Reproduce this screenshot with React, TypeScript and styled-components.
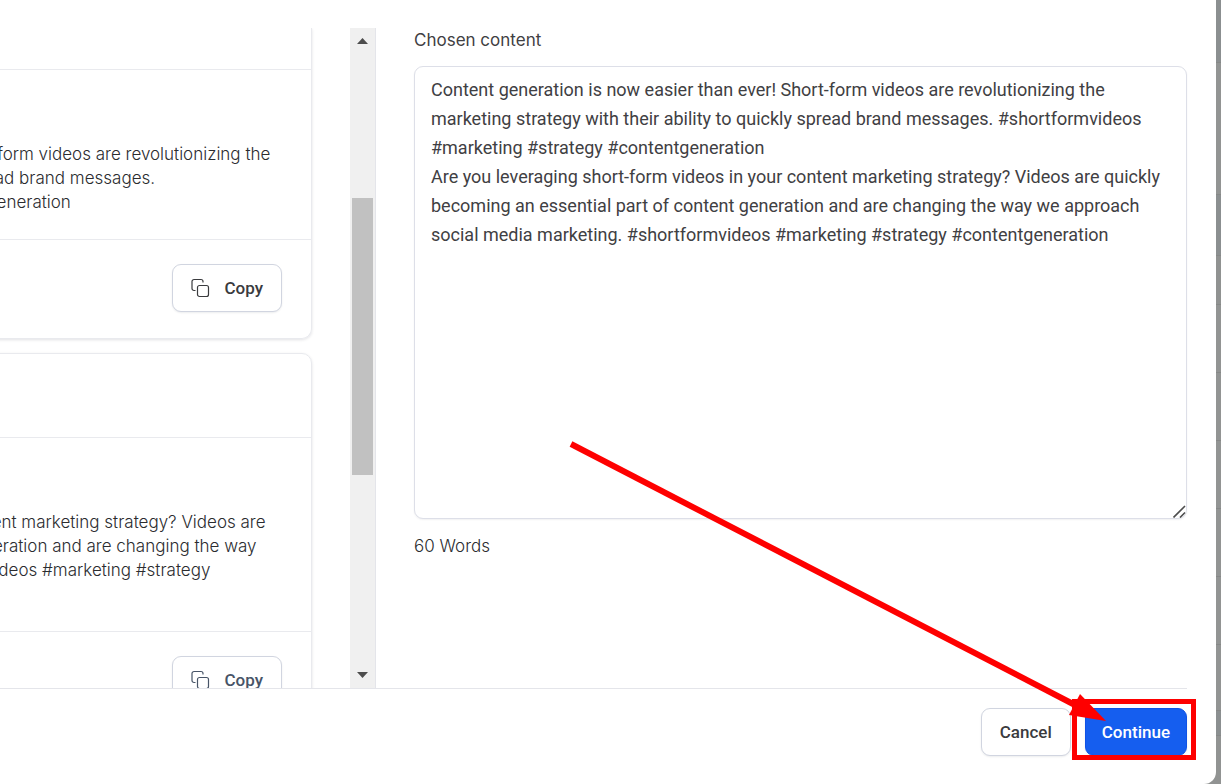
import React from "react";
import styled, { createGlobalStyle } from "styled-components";

const GlobalStyle = createGlobalStyle`
  *, *::before, *::after { box-sizing: border-box; }
  body { margin: 0; font-family: Inter, "Liberation Sans", sans-serif; color: #3f4043; }
`;

const Backdrop = styled.div`
  display: flex;
  height: 100vh;
  min-height: 520px;
  overflow: hidden;
  background: #919392;
`;

const Dialog = styled.main`
  flex: 1;
  min-width: 0;
  display: flex;
  flex-direction: column;
  padding-top: 28px;
  background: #fff;
  border-bottom-right-radius: 12px;
`;

const PageEdge = styled.aside`
  flex: 0 0 5px;
  display: flex;
  flex-direction: column;
`;

const Strip = styled.div<{ $size: number; $tone: string }>`
  flex: 0 0 ${(p) => p.$size}px;
  background: ${(p) => p.$tone};
  border-bottom: 1px solid #868887;
`;

const Columns = styled.div`
  flex: 1;
  min-height: 0;
  display: flex;
`;

const Results = styled.section`
  flex: 0 0 350px;
  display: flex;
  flex-direction: column;
  align-items: flex-end;
  gap: 14px;
  padding-right: 38px;
  overflow: hidden;
`;

const Card = styled.article<{ $scrolled?: boolean }>`
  flex: none;
  width: 738px;
  border: 1px solid #e9eaee;
  border-radius: ${(p) => (p.$scrolled ? "0 0 10px 10px" : "10px")};
  border-top-width: ${(p) => (p.$scrolled ? 0 : 1)}px;
  box-shadow: 0 1px 3px rgba(20, 20, 43, 0.12);
`;

const CardHeader = styled.header<{ $size: number }>`
  height: ${(p) => p.$size}px;
  border-bottom: 1px solid #e9eaee;
`;

const CardText = styled.p`
  margin: 0;
  padding: 72px 24px 25px;
  color: #2b2c2f;
  font-size: 17px;
  font-weight: 300;
  line-height: 24px;
  white-space: pre;
`;

const CardFooter = styled.footer`
  display: flex;
  justify-content: flex-end;
  padding: 24px 29px 26px;
  border-top: 1px solid #e9eaee;
`;

const Button = styled.button<{ $tone?: "primary" | "muted"; $pad?: number }>`
  display: flex;
  align-items: center;
  gap: 13px;
  height: 48px;
  padding: 0 ${(p) => p.$pad ?? 18}px;
  border: 1px solid ${(p) => (p.$tone === "primary" ? "#0f52e6" : "#d1d5e0")};
  border-radius: 9px;
  background: ${(p) => (p.$tone === "primary" ? "#155eef" : "#fff")};
  color: ${(p) => (p.$tone === "primary" ? "#fff" : p.$tone === "muted" ? "#475467" : "#3a3b3e")};
  font-family: Roboto, sans-serif;
  font-size: 17px;
  font-weight: 500;
  line-height: 24px;
  box-shadow: 0 1px 2px rgba(16, 24, 40, 0.08);
`;

const ScrollTrack = styled.div`
  flex: 0 0 26px;
  display: flex;
  flex-direction: column;
  align-items: center;
  justify-content: space-between;
  padding: 10px 1px;
  background: #f0f0f0;
  border-right: 1px solid #e4e5ea;
`;

const ScrollRoom = styled.div`
  flex: 1;
  align-self: stretch;
  display: flex;
  flex-direction: column;
  margin: 8px 1px;
`;

const ScrollThumb = styled.div`
  flex: 0 0 277px;
  margin-top: 146px;
  background: #c1c1c1;
`;

const Editor = styled.section`
  flex: 1;
  min-width: 0;
  display: flex;
  flex-direction: column;
  padding: 0 29px 0 38px;
`;

const Label = styled.label`
  font-size: 17px;
  line-height: 24px;
  margin-bottom: 14px;
`;

const TextBoxWrap = styled.div`
  position: relative;
`;

const TextBox = styled.textarea`
  display: block;
  width: 100%;
  height: 453px;
  padding: 8px 16px;
  border: 1px solid #dddfe8;
  border-radius: 9px;
  outline: none;
  resize: none;
  color: inherit;
  background: #fff;
  font-family: Roboto, sans-serif;
  font-size: 18px;
  line-height: 29px;
  box-shadow: 0 1px 2px rgba(16, 24, 40, 0.06);
`;

const Grip = styled.svg`
  position: absolute;
  right: 1px;
  bottom: 1px;
  pointer-events: none;
`;

const WordCount = styled.p`
  margin: 15px 0 0;
  color: #2b2c2f;
  font-size: 17px;
  font-weight: 300;
  line-height: 24px;
`;

const Actions = styled.footer`
  display: flex;
  justify-content: flex-end;
  gap: 14px;
  margin-right: 29px;
  padding: 19px 0 28px;
  border-top: 1px solid #e4e5ea;
`;

const Highlighted = styled.div`
  position: relative;
`;

const Frame = styled.div`
  position: absolute;
  inset: -9px -9px -4px -13px;
  border: 5px solid #fe0000;
  pointer-events: none;
`;

const Arrow = styled.svg`
  position: absolute;
  right: 77px;
  bottom: 32px;
  pointer-events: none;
`;

const CopyIcon = () => (
  <svg width="20" height="20" viewBox="0 0 20 20" fill="none" stroke="currentColor" strokeWidth="1.2" aria-hidden="true">
    <rect x="6.500" y="7.500" width="11" height="11" rx="2" />
    <path d="M4.500 12.500H3a2 2 0 0 1-2-2v-7a2 2 0 0 1 2-2h7a2 2 0 0 1 2 2v1" />
  </svg>
);

const Triangle = ({ down }: { down?: boolean }) => (
  <svg width="11" height="6" viewBox="0 0 11 6" fill="#4d4d4d" aria-hidden="true">
    <path d={down ? "M0 0h11L5.5 6z" : "M0 6h11L5.5 0z"} />
  </svg>
);

const strips: [number, string][] = [
  [63, "#8b8f90"], [132, "#929493"], [61, "#8b8f90"], [49, "#909291"], [68, "#929493"],
  [68, "#929493"], [68, "#929493"], [68, "#929493"], [68, "#929493"], [66, "#929493"], [25, "#8b8f90"],
];

const first = `Content generation is now easier than ever! Short-form videos are revolutionizing the
marketing strategy with their ability to quickly spread brand messages.
#shortformvideos #marketing #strategy #contentgeneration`;

const second = `Are you leveraging short-form videos in your content marketing strategy? Videos are
quickly becoming an essential part of content generation and are changing the way
we approach social media marketing. #shortformvideos #marketing #strategy
#contentgeneration`;

const chosen = [first, second].map((t) => t.replace(/\n/g, " ")).join("\n");

export default function App() {
  return (
    <>
      <GlobalStyle />
      <Backdrop>
        <Dialog>
          <Columns>
            <Results>
              <Card $scrolled>
                <CardHeader $size={42} />
                <CardText>{first}</CardText>
                <CardFooter>
                  <Button><CopyIcon />Copy</Button>
                </CardFooter>
              </Card>
              <Card>
                <CardHeader $size={84} />
                <CardText>{second}</CardText>
                <CardFooter>
                  <Button $tone="muted"><CopyIcon />Copy</Button>
                </CardFooter>
              </Card>
            </Results>
            <ScrollTrack>
              <Triangle />
              <ScrollRoom><ScrollThumb /></ScrollRoom>
              <Triangle down />
            </ScrollTrack>
            <Editor>
              <Label htmlFor="chosen">Chosen content</Label>
              <TextBoxWrap>
                <TextBox id="chosen" defaultValue={chosen} spellCheck={false} />
                <Grip width="13" height="13" viewBox="0 0 13 13" fill="none" stroke="#4d4d4d" strokeWidth="1.6" aria-hidden="true">
                  <path d="M0.500 12.500L12 1M7 12.500L12 7.500" />
                </Grip>
              </TextBoxWrap>
              <WordCount>60 Words</WordCount>
            </Editor>
          </Columns>
          <Actions>
            <Button>Cancel</Button>
            <Highlighted>
              <Button $tone="primary" $pad={16}>Continue</Button>
              <Frame />
              <Arrow width="544" height="284" viewBox="0 0 544 284" aria-hidden="true">
                <path d="M5 4L509 265" stroke="#fe0000" strokeWidth="6" />
                <path d="M514 254L503 275L540 281z" fill="#fe0000" />
              </Arrow>
            </Highlighted>
          </Actions>
        </Dialog>
        <PageEdge>
          {strips.map(([size, tone], i) => <Strip key={i} $size={size} $tone={tone} />)}
        </PageEdge>
      </Backdrop>
    </>
  );
}
